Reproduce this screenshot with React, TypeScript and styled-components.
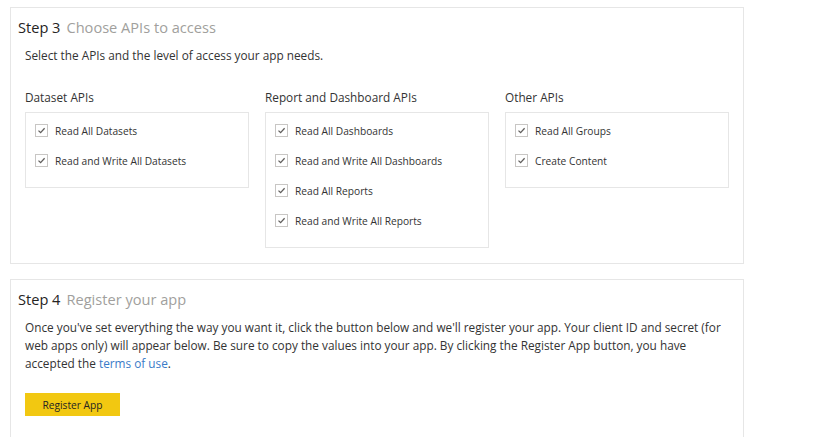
import React from 'react';
import styled, { createGlobalStyle } from 'styled-components';

const GlobalStyle = createGlobalStyle`
  body {
    margin: 0;
    background: #ffffff;
    font-family: "Open Sans", "Noto Sans", sans-serif;
    color: #333333;
  }
`;

const StPage = styled.div`
  width: 734px;
  padding: 7px 0 0 10px;
  display: flex;
  flex-direction: column;
  gap: 15px;
`;

const StCard = styled.section`
  border: 1px solid #e6e6e6;
  background: #ffffff;
  padding: 9px 15px 15px 14px;
`;

const StStepTitle = styled.h2`
  margin: 0 0 0 -7px;
  font-size: 14.6px;
  font-weight: 400;
  line-height: 20px;
  color: #252423;
`;

const StStepName = styled.span`
  margin-left: 6px;
  color: #a19f9d;
`;

const StText = styled.p`
  margin: 9px 0 0;
  font-size: 11.8px;
  line-height: 18px;
  color: #333333;
`;

const StLink = styled.a`
  color: #3a7bc8;
  text-decoration: none;
`;

const StColumns = styled.div`
  display: grid;
  grid-template-columns: repeat(3, 224px);
  column-gap: 16px;
  margin-top: 24px;
`;

const StColumnTitle = styled.h3`
  margin: 0 0 6px;
  font-size: 11.8px;
  font-weight: 400;
  line-height: 18px;
  color: #333333;
`;

const StBox = styled.div`
  border: 1px solid #e6e6e6;
  padding: 11px 9px 3px;
  display: flex;
  flex-direction: column;
`;

const StOption = styled.label`
  display: flex;
  align-items: center;
  gap: 7px;
  height: 13px;
  margin-bottom: 17px;
  font-size: 10.2px;
  color: #333333;
`;

const StCheck = styled.span`
  width: 11px;
  height: 11px;
  border: 1px solid #c8c6c4;
  display: flex;
  align-items: center;
  justify-content: center;
  flex: none;
`;

const StButton = styled.button`
  display: block;
  margin: 21px 0 20px;
  width: 95px;
  height: 23px;
  border: none;
  background: #f2c811;
  color: #252423;
  font-family: inherit;
  font-size: 10.2px;
  padding: 0;
  cursor: pointer;
`;

const Checkbox = () => (
  <StCheck>
    <svg width="9" height="9" viewBox="0 0 9 9">
      <path d="M1.5 4.6 L3.6 6.6 L7.6 2.2" fill="none" stroke="#605e5c" strokeWidth="1.3" />
    </svg>
  </StCheck>
);

const apiGroups = [
  { title: 'Dataset APIs', items: ['Read All Datasets', 'Read and Write All Datasets'] },
  {
    title: 'Report and Dashboard APIs',
    items: ['Read All Dashboards', 'Read and Write All Dashboards', 'Read All Reports', 'Read and Write All Reports'],
  },
  { title: 'Other APIs', items: ['Read All Groups', 'Create Content'] },
];

export default function App() {
  return (
    <>
      <GlobalStyle />
      <StPage>
        <StCard>
          <StStepTitle>
            Step 3<StStepName>Choose APIs to access</StStepName>
          </StStepTitle>
          <StText>Select the APIs and the level of access your app needs.</StText>
          <StColumns>
            {apiGroups.map((group) => (
              <div key={group.title}>
                <StColumnTitle>{group.title}</StColumnTitle>
                <StBox>
                  {group.items.map((item) => (
                    <StOption key={item}>
                      <Checkbox />
                      {item}
                    </StOption>
                  ))}
                </StBox>
              </div>
            ))}
          </StColumns>
        </StCard>
        <StCard>
          <StStepTitle>
            Step 4<StStepName>Register your app</StStepName>
          </StStepTitle>
          <StText>
            Once you've set everything the way you want it, click the button below and we'll register your app. Your
            client ID and secret (for web apps only) will appear below. Be sure to copy the values into your app. By
            clicking the Register App button, you have accepted the <StLink href="#">terms of use</StLink>.
          </StText>
          <StButton>Register App</StButton>
        </StCard>
      </StPage>
    </>
  );
}
